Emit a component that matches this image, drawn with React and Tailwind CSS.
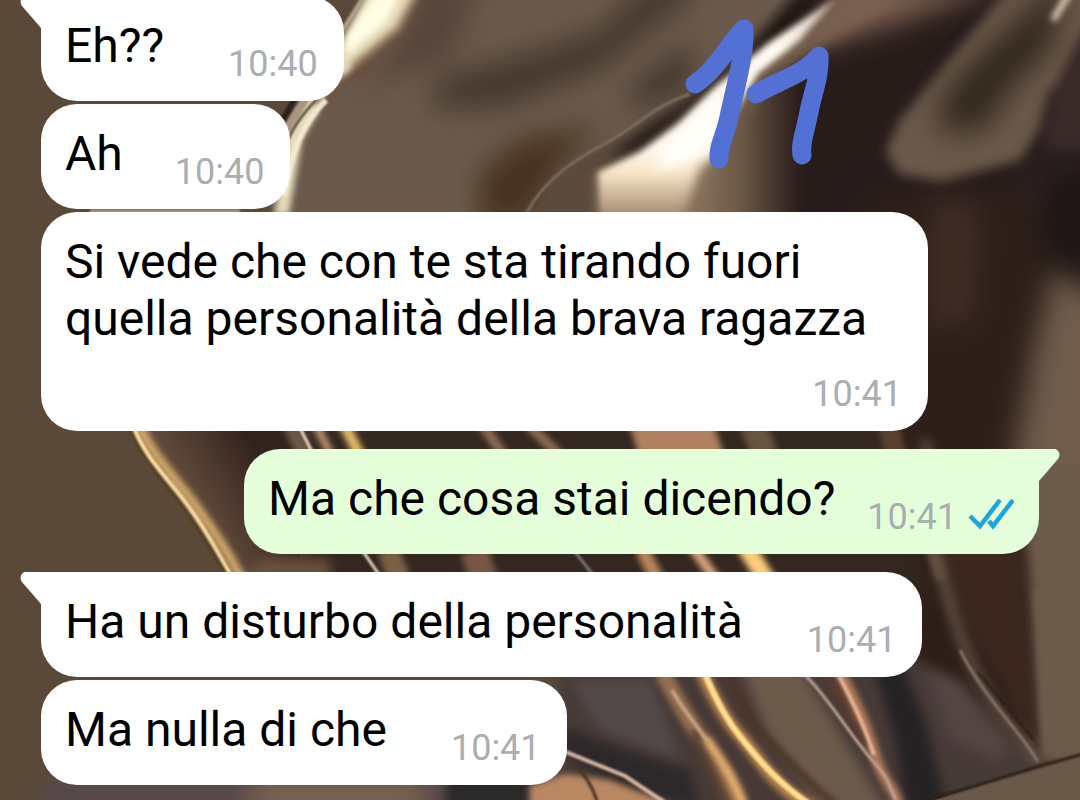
import { clsx } from 'clsx'

const messages = [
  { id: 1, text: 'Eh??', time: '10:40', tail: true },
  { id: 2, text: 'Ah', time: '10:40', short: true },
  { id: 3, text: 'Si vede che con te sta tirando fuori quella personalità della brava ragazza', time: '10:41', long: true },
  { id: 4, text: 'Ma che cosa stai dicendo?', time: '10:41', mine: true, tail: true },
  { id: 5, text: 'Ha un disturbo della personalità', time: '10:41', tail: true },
  { id: 6, text: 'Ma nulla di che', time: '10:41' },
]

const Blur = ({ id, size }) => (
  <filter
    id={id}
    filterUnits="userSpaceOnUse"
    x="-60"
    y="-60"
    width="1200"
    height="920"
    colorInterpolationFilters="sRGB"
  >
    <feGaussianBlur stdDeviation={size} />
  </filter>
)

// Satin wallpaper: broad blurred folds first, thin highlights on top
const Wallpaper = () => (
  <svg
    className="absolute inset-0 h-full w-full"
    viewBox="0 0 1080 800"
    preserveAspectRatio="xMidYMid slice"
    aria-hidden="true"
  >
    <defs>
      <Blur id="b1" size="1" />
      <Blur id="b3" size="3" />
      <Blur id="b6" size="6" />
      <Blur id="b14" size="14" />
      <linearGradient id="cream" x1="640" y1="150" x2="640" y2="214" gradientUnits="userSpaceOnUse">
        <stop offset="0" stopColor="#fffaf0" />
        <stop offset="0.35" stopColor="#f8e6c6" />
        <stop offset="1" stopColor="#a88e75" />
      </linearGradient>
      <linearGradient id="cloth" x1="690" y1="0" x2="800" y2="0" gradientUnits="userSpaceOnUse">
        <stop offset="0" stopColor="#8a745d" />
        <stop offset="0.45" stopColor="#6d5947" />
        <stop offset="1" stopColor="#281c1b" />
      </linearGradient>
      <linearGradient id="fold" x1="150" y1="500" x2="250" y2="440" gradientUnits="userSpaceOnUse">
        <stop offset="0" stopColor="#a07a50" />
        <stop offset="0.35" stopColor="#5f483a" />
        <stop offset="1" stopColor="#33231e" />
      </linearGradient>
    </defs>

    <rect width="1080" height="800" fill="#5a4939" />

    {/* top middle */}
    <path d="M380 -20H800V230H284L296 150L330 90Z" fill="#6b5a4b" filter="url(#b3)" />
    <g filter="url(#b14)">
      <path d="M425 -20H480L450 60L380 80L350 100L400 40Z" fill="#56443a" />
      <path d="M660 -30L600 30L540 50L440 78L430 108L500 108L600 70L700 -10Z" fill="#46382f" />
      <path d="M630 90L690 40V90L630 110Z" fill="#43352f" />
      <path d="M600 125L520 140L480 175L480 225H525L560 165Z" fill="#46311f" />
    </g>
    <g filter="url(#b3)">
      <path d="M368 -10H416L402 22L356 64L326 98L302 140L289 215H274L286 130L345 34Z" fill="#e6dab8" />
      <path d="M376 -6H400L386 22L346 56V34Z" fill="#fffde4" />
      <path d="M416 -6L398 28L352 66" stroke="#a08769" strokeWidth="6" fill="none" />
      <path d="M372 64L340 82L318 108" stroke="#6a4c3b" strokeWidth="7" fill="none" />
    </g>
    <g filter="url(#b1)" fill="none">
      <path d="M326 100C303 122 291 152 284 196" stroke="#f3e9cf" strokeWidth="6" />
      <path d="M318 98C300 116 290 132 284 150" stroke="#302620" strokeWidth="2" />
      <path d="M306 98L286 130" stroke="#ab9480" strokeWidth="8" />
      <path d="M295 98L283 120" stroke="#2c211a" strokeWidth="6" />
      <path d="M362 0L340 34" stroke="#b7a48c" strokeWidth="4" />
      <path d="M90 211H240" stroke="#b8a58c" strokeWidth="3" />
    </g>
    <path d="M606 145L680 98L735 60L790 -10H850L760 70L690 125L640 158L590 176L592 225H530L562 168Z" fill="#5b4b3e" filter="url(#b3)" />

    {/* dark cloth on the right */}
    <path d="M860 -30L790 30L750 70L700 130L686 240H1120V-30Z" fill="url(#cloth)" filter="url(#b6)" />
    <path d="M850 -20L782 40L750 90L730 140L770 80L850 30L900 0Z" fill="#735d4c" filter="url(#b6)" />
    <path d="M604 160L650 126L690 100L740 58L800 -8H844L770 46L700 102L640 148Z" fill="#1f1513" filter="url(#b6)" />
    <path d="M600 228L598 172L640 152L678 124L716 86L770 42L840 -4L800 40L758 74L740 104L720 140L704 178L694 228Z" fill="url(#cream)" filter="url(#b3)" />
    <path d="M652 172L680 134L722 94L714 134L690 160Z" fill="#fffffa" filter="url(#b6)" />
    <path d="M700 168L716 156L704 230H680Z" fill="#836d57" filter="url(#b6)" />
    <g filter="url(#b14)">
      <path d="M850 -20H1010L900 22L800 52Z" fill="#7b6050" />
      <path d="M1100 20L1052 92L1032 160L1010 180L1020 300H1100Z" fill="#2c2120" />
    </g>
    <g filter="url(#b6)">
      <path d="M1016 -20L944 66L900 120L886 150L898 174L940 182L1020 160L1038 130L1052 80L1100 10V-20Z" fill="#6b594a" />
      <path d="M1090 34L1056 90L1044 150L1100 150Z" fill="#3a2b29" />
      <path d="M1078 34L1050 88" stroke="#6d584a" strokeWidth="8" />
    </g>
    <path d="M1070 -30L995 40L945 90L938 132L985 130L1010 90L1050 50Z" fill="#34291f" filter="url(#b14)" />
    <path d="M1070 -8L1053 20" stroke="#f0d8bd" strokeWidth="6" filter="url(#b3)" />
    <path d="M526 214C545 178 575 160 606 143S655 105 690 94" stroke="#7d6c5d" strokeWidth="3" fill="none" filter="url(#b1)" />

    {/* right column */}
    <g filter="url(#b14)">
      <path d="M860 196H1120V840H900Z" fill="#2e1f19" />
      <path d="M930 200H980L975 320L930 330Z" fill="#3f2d25" />
      <path d="M1054 270L1036 340L1014 460L1030 560L1042 780H1120V310Z" fill="#6f5c4c" />
      <path d="M1100 170H1050L1040 250L1100 290Z" fill="#1d1615" />
    </g>

    {/* lower folds */}
    <path d="M134 425H300V580H236Z" fill="#33271f" />
    <path d="M300 410H900L930 600H300Z" fill="#33271f" filter="url(#b14)" />
    <path d="M134 425H300V580H238Z" fill="url(#fold)" />
    <path d="M930 460L950 600L1005 690L1042 762L1030 560L1018 470Z" fill="#3b271f" filter="url(#b6)" />
    <path d="M1018 470L1030 555L1044 760L1120 740V470Z" fill="#6d5b4b" filter="url(#b6)" />
    <path d="M1034 590L1044 757L1100 740V590Z" fill="#6d5b4b" filter="url(#b3)" />
    <path d="M262 560H330V580H240Z" fill="#6e5140" filter="url(#b6)" />
    <path d="M30 830C46 780 60 740 100 720H960L1042 764L900 830Z" fill="#57494a" filter="url(#b6)" />
    <path d="M250 770H425V830H250Z" fill="#776150" filter="url(#b14)" />
    <path d="M446 770H530V830H446Z" fill="#2b2828" filter="url(#b6)" />
    <g filter="url(#b6)">
      <path d="M560 660H920L960 700L1040 766L900 820H560Z" fill="#473a36" />
      <path d="M570 680H650L680 760L600 730Z" fill="#524a49" />
      <path d="M560 725L620 748L690 770L700 810L620 790L560 750Z" fill="#2c282a" />
      <path d="M738 660H796L892 820H832L770 740Z" fill="#6c5a4b" />
      <path d="M872 660L895 740L908 820L945 800L925 720L900 660Z" fill="#242224" />
      <path d="M925 665L950 740L1000 762L1010 740L960 680Z" fill="#544442" />
      <path d="M926 440C928 540 950 620 975 670S1020 735 1040 764" stroke="#67554a" strokeWidth="9" fill="none" />
    </g>
    <g filter="url(#b1)" fill="none">
      <path d="M960 650C985 700 1020 730 1038 762" stroke="#857366" strokeWidth="3" />
      <path d="M978 672L1034 740" stroke="#2a1a15" strokeWidth="2" />
    </g>

    {/* gold edges */}
    <g filter="url(#b3)" fill="none">
      <path d="M139 425C152 458 178 480 198 509S227 551 242 580" stroke="#d6ac6c" strokeWidth="9" />
      <path d="M290 425L304 455" stroke="#6e5a46" strokeWidth="14" />
      <path d="M316 425L330 453" stroke="#c9a079" strokeWidth="7" />
      <path d="M343 422L360 456" stroke="#e6bd68" strokeWidth="11" />
      <path d="M482 424L504 456M528 424L560 456" stroke="#8f6c55" strokeWidth="10" />
      <path d="M628 420L712 420L726 460H640Z" fill="#b08060" />
      <path d="M752 424L766 456" stroke="#69543f" strokeWidth="26" />
      <path d="M888 424L896 456" stroke="#59432f" strokeWidth="20" />
      <path d="M388 550L400 580" stroke="#7c6045" strokeWidth="22" />
      <path d="M474 550L484 580" stroke="#775643" strokeWidth="28" />
      <path d="M642 550L658 580" stroke="#bb8459" strokeWidth="14" />
      <path d="M692 546L716 580" stroke="#dda77c" strokeWidth="10" />
      <path d="M745 546L768 582" stroke="#ffcd78" strokeWidth="18" />
      <path d="M930 546L942 580" stroke="#66513f" strokeWidth="10" />
    </g>
    <g filter="url(#b1)" fill="none">
      <path d="M134 428C146 458 165 475 186 503S215 548 234 580" stroke="#ffe2a6" strokeWidth="4" />
      <path d="M130 430C143 460 161 478 182 506S211 550 229 580" stroke="#4e3c1c" strokeWidth="2" />
      <path d="M300 428L312 452M362 550L380 576" stroke="#eadac8" strokeWidth="3" />
      <path d="M575 552L594 576" stroke="#777174" strokeWidth="3" />
    </g>
    <g filter="url(#b3)" fill="none">
      <path d="M662 672C680 706 692 726 708 748S735 785 742 810" stroke="#96704f" strokeWidth="16" />
      <path d="M706 738C720 758 732 775 744 806" stroke="#f0b871" strokeWidth="8" />
      <path d="M694 730C706 760 720 780 726 806" stroke="#5a4334" strokeWidth="8" />
      <path d="M700 668C715 702 728 723 742 738S770 785 816 810" stroke="#b98450" strokeWidth="13" />
      <path d="M726 668C740 702 752 724 770 742S800 775 836 806" stroke="#4b3426" strokeWidth="7" />
      <path d="M838 668C855 700 867 725 875 755S895 785 900 810" stroke="#b9805f" strokeWidth="10" />
      <path d="M822 672C842 700 856 720 866 745" stroke="#5b3c2e" strokeWidth="8" />
      <path d="M530 786L566 774L610 780L690 812H530Z" fill="#b98761" />
    </g>
    <g filter="url(#b1)" fill="none">
      <path d="M704 672C718 704 728 722 742 739S774 780 812 806" stroke="#ffe08c" strokeWidth="6" />
      <path d="M672 690C684 712 696 724 708 742" stroke="#c79f7d" strokeWidth="4" />
      <path d="M839 676C852 700 866 730 874 755" stroke="#e6b393" strokeWidth="4" />
      <path d="M806 676C830 700 850 735 872 760S886 782 896 800" stroke="#bda398" strokeWidth="3" />
      <path d="M566 752L625 776L664 802" stroke="#d9b9a5" strokeWidth="4" />
      <path d="M574 764Q590 778 598 804" stroke="#493328" strokeWidth="3" />
    </g>

    {/* table edge */}
    <path d="M915 806L1044 765L1090 752V810Z" fill="#6a5949" />
    <path d="M915 804L1044 765L1090 752" stroke="#2c1e18" strokeWidth="3" fill="none" filter="url(#b1)" />
  </svg>
)

const Scribble = () => (
  <svg
    className="absolute top-0 left-[680px]"
    width="160"
    height="180"
    viewBox="680 0 160 180"
    role="img"
    aria-label="11"
  >
    <g fill="none" stroke="#5370d4" strokeWidth="19" strokeLinecap="round" strokeLinejoin="round">
      <path d="M695 84C715 71 724 51 744 29C745 55 735 88 729 117C725 137 718 145 719 159" />
      <path d="M756 94C775 82 804 75 819 56C820 77 813 91 809 112C804 137 800 144 802 155" />
    </g>
  </svg>
)

const Tail = ({ mine }) => (
  <svg
    className={clsx('absolute top-0 h-8 w-[22px]', mine ? 'left-full -ml-px -scale-x-100' : 'right-full -mr-px')}
    viewBox="0 0 22 32"
    aria-hidden="true"
  >
    <path d="M22 0H6C1 0 -1 6 2 10L21 32H22Z" fill={mine ? '#e4ffda' : '#ffffff'} />
  </svg>
)

const Ticks = () => (
  <svg width="46" height="40" viewBox="0 0 46 40" role="img" aria-label="Letto">
    <g fill="none" stroke="#1ba5e1" strokeWidth="4.5">
      <path d="M2 18L12 28L32 2" />
      <path d="M21 23L25 28L45 2" />
    </g>
  </svg>
)

const Message = ({ message }) => {
  const { text, time, mine, tail, short, long } = message

  return (
    <li
      className={clsx(
        'relative flex max-w-[887px] rounded-[36px] pt-[21px] pb-4 pl-6',
        mine ? 'gap-8 self-end bg-[#e4ffda] pr-[25px]' : 'self-start bg-white pr-[26px]',
        !mine && !short && !long && 'gap-16',
        short && 'gap-13',
        long && 'flex-col',
        tail && (mine ? 'rounded-tr-none' : 'rounded-tl-none'),
        tail && 'not-first:mt-[15px]',
      )}
    >
      {tail && <Tail mine={mine} />}
      <p className="text-5xl leading-[57px] text-black">{text}</p>
      <div className="flex items-end gap-[11px] self-end pt-[26px] text-4xl leading-[42px] text-[#a9aeb1]">
        <time>{time}</time>
        {mine && <Ticks />}
      </div>
    </li>
  )
}

export default function App() {
  return (
    <main className="relative min-h-screen overflow-hidden bg-[#5a4939] font-[Roboto,sans-serif]">
      <Wallpaper />
      <ul className="relative -mt-1 flex flex-col gap-[3px] px-[41px]">
        {messages.map((message) => (
          <Message key={message.id} message={message} />
        ))}
      </ul>
      <Scribble />
    </main>
  )
}
